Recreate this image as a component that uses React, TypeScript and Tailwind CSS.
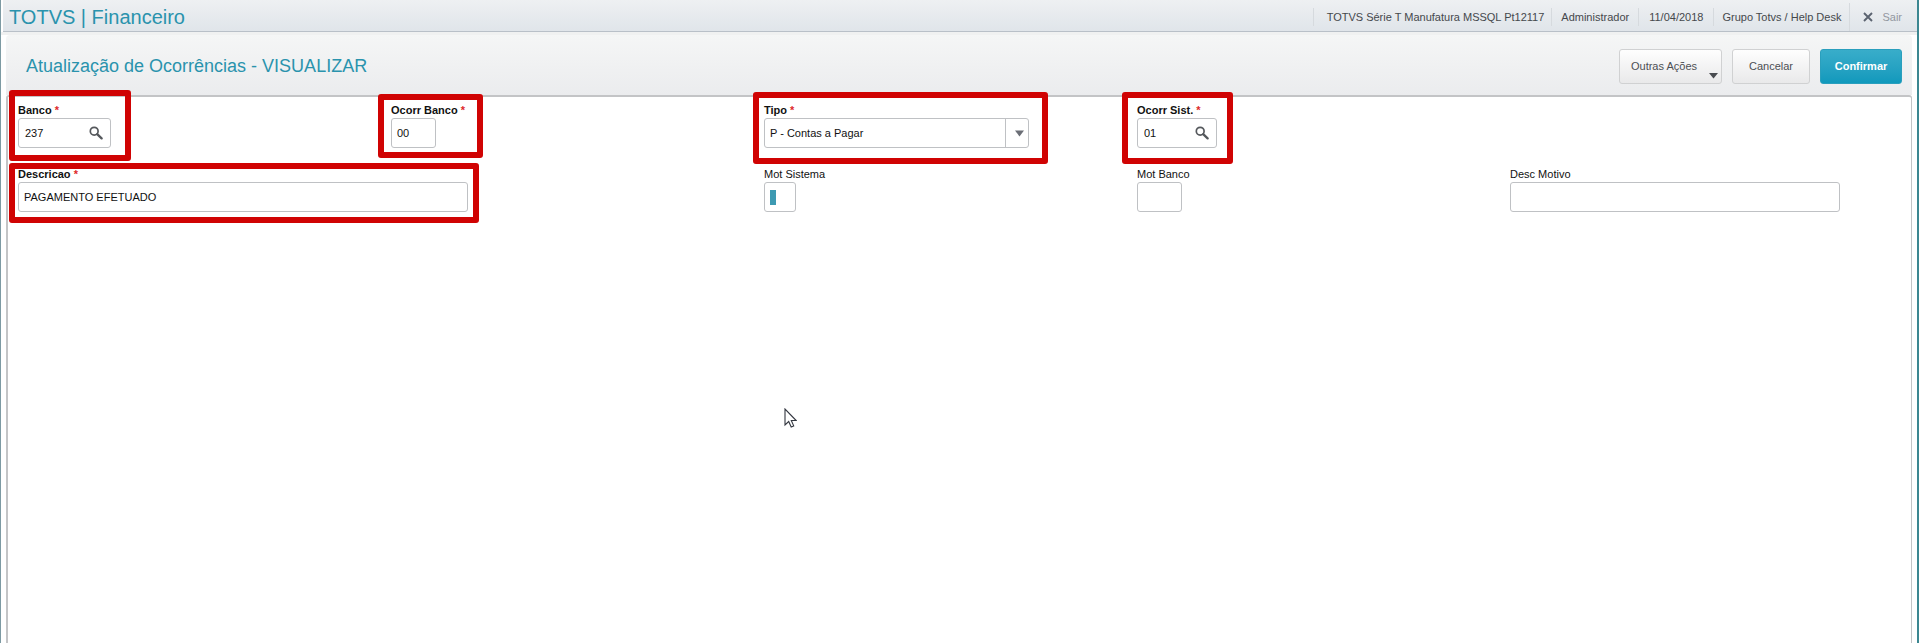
import type { ReactNode } from 'react';

type FieldProps = {
  id: string;
  label: string;
  required?: boolean;
  className?: string;
  mark?: string;
  children: ReactNode;
};

const inputBase =
  'h-[30px] rounded-[3px] border border-[#bfc1c4] bg-white text-[11px] text-[#111] outline-none';

function Field({ id, label, required, className = '', mark, children }: FieldProps) {
  return (
    <div className={`relative flex flex-col items-start ${className}`}>
      <label
        htmlFor={id}
        className={`h-[15px] whitespace-nowrap text-[11px] leading-[15px] text-[#111] ${required ? 'font-bold' : ''}`}
      >
        {label}
        {required && <span className="text-[#dd2a2a]"> *</span>}
      </label>
      {children}
      {mark && (
        <span
          aria-hidden="true"
          className={`pointer-events-none absolute rounded-[3px] border-[6px] border-[#d00303] ${mark}`}
        />
      )}
    </div>
  );
}

function SearchIcon() {
  return (
    <svg width="14" height="14" viewBox="0 0 14 14" fill="none" stroke="#55585c" aria-hidden="true">
      <circle cx="5.2" cy="5.2" r="3.9" strokeWidth="1.7" />
      <path d="M8.2 8.2 12.6 12.4" strokeWidth="2.3" strokeLinecap="round" />
    </svg>
  );
}

function SearchInput({ id, value, className }: { id: string; value: string; className: string }) {
  return (
    <div className={`flex items-center pr-[7px] pl-[6px] ${inputBase} ${className}`}>
      <input id={id} readOnly value={value} className="min-w-0 flex-1 outline-none" />
      <button type="button" aria-label="Pesquisar">
        <SearchIcon />
      </button>
    </div>
  );
}

export default function App() {
  return (
    <div className="relative flex min-h-screen flex-col border-r-2 border-l border-r-[#3c8791] border-l-[#7d9aa3] bg-white font-['Liberation_Sans',Arial,sans-serif]">
      <header className="ml-[2px] flex h-8 items-center justify-between border-b border-[#b9c0c8] bg-linear-to-b from-[#eef0f2] to-[#e0e5ea]">
        <div className="pt-[3px] pl-[6px] text-[20px] leading-6 text-[#2a93ad]">TOTVS | Financeiro</div>
        <div className="flex items-center pt-[3px] text-[11px] whitespace-nowrap text-[#45484c]">
          <span className="flex h-[18px] items-center border-l border-[#d6dade] pr-[7px] pl-[13px]">
            TOTVS Série T Manufatura MSSQL Pt12117
          </span>
          <span className="flex h-[18px] items-center border-l border-[#d6dade] px-[9px]">Administrador</span>
          <span className="flex h-[18px] items-center border-l border-[#d6dade] px-[10px]">11/04/2018</span>
          <span className="flex h-[18px] items-center border-l border-[#d6dade] px-2">
            Grupo Totvs / Help Desk
          </span>
          <button
            type="button"
            className="flex h-[28px] items-center gap-[9px] border-l border-[#d6dade] pr-[15px] pl-[13px] text-[#9297a0]"
          >
            <svg width="10" height="10" viewBox="0 0 10 10" stroke="#5b6370" strokeWidth="1.9" aria-hidden="true">
              <path d="M1 1 9 9M9 1 1 9" />
            </svg>
            Sair
          </button>
        </div>
      </header>

      <div className="h-[3px] bg-[#f0f1f1]" />

      <main className="mr-[5px] ml-[5px] flex flex-1 flex-col">
        <div className="flex h-[60px] items-center justify-between rounded-t-sm bg-linear-to-b from-[#f5f6f6] to-[#ebecee] pr-[10px] pl-5">
          <h1 className="pt-[2px] text-[18px] text-[#2a93ad]">Atualização de Ocorrências - VISUALIZAR</h1>
          <div className="flex gap-[10px] pt-[3px] text-[11px]">
            <button
              type="button"
              className="relative h-[35px] w-[103px] rounded-[3px] border border-[#d0d1d2] bg-linear-to-b from-[#fefefe] to-[#e9e9ea] pr-[13px] text-[#4c4f54]"
            >
              Outras Ações
              <svg className="absolute right-[3px] bottom-[4px]" width="9" height="6" viewBox="0 0 9 6" aria-hidden="true">
                <path d="M0 0h9L4.500 5.500z" fill="#484b50" />
              </svg>
            </button>
            <button
              type="button"
              className="h-[35px] w-[78px] rounded-[3px] border border-[#d0d1d2] bg-linear-to-b from-[#fefefe] to-[#e9e9ea] text-[#4c4f54]"
            >
              Cancelar
            </button>
            <button
              type="button"
              className="h-[35px] w-[82px] rounded-[3px] border border-[#2a9fbd] bg-linear-to-b from-[#38adca] to-[#1099bc] font-bold text-white"
            >
              Confirmar
            </button>
          </div>
        </div>

        <form className="grid flex-1 grid-cols-5 content-start gap-y-[19px] rounded-t-[3px] border-t-2 border-r border-l-2 border-[#c3c4c6] pt-[6px] pr-[28px] pl-[10px]">
          <Field id="banco" label="Banco" required mark="-left-[9px] -top-[13px] h-[71px] w-[122px]">
            <SearchInput id="banco" value="237" className="w-[93px]" />
          </Field>
          <Field id="ocorr-banco" label="Ocorr Banco" required mark="-left-[13px] -top-[9px] h-[64px] w-[105px]">
            <input id="ocorr-banco" readOnly value="00" className={`w-[45px] px-[5px] ${inputBase}`} />
          </Field>
          <Field id="tipo" label="Tipo" required mark="-left-[11px] -top-[11px] h-[72px] w-[295px]">
            <div className="relative">
              <select id="tipo" className={`w-[265px] appearance-none px-[5px] ${inputBase}`}>
                <option>P - Contas a Pagar</option>
              </select>
              <span className="pointer-events-none absolute top-px right-px bottom-px flex w-[23px] items-center justify-center border-l border-[#bfc1c4]">
                <svg width="9" height="7" viewBox="0 0 9 7" className="ml-1" aria-hidden="true">
                  <path d="M0 0.500h9L4.500 6.500z" fill="#6b6e76" />
                </svg>
              </span>
            </div>
          </Field>
          <Field id="ocorr-sist" label="Ocorr Sist." required mark="-left-[15px] -top-[11px] h-[72px] w-[111px]">
            <SearchInput id="ocorr-sist" value="01" className="w-[80px]" />
          </Field>

          <Field
            id="descricao"
            label="Descricao"
            required
            className="col-span-2 col-start-1"
            mark="-left-[9px] -top-[4px] h-[60px] w-[470px]"
          >
            <input
              id="descricao"
              readOnly
              value="PAGAMENTO EFETUADO"
              className={`w-[450px] px-[5px] ${inputBase}`}
            />
          </Field>
          <Field id="mot-sistema" label="Mot Sistema">
            <div className={`flex w-[32px] items-center pl-[5px] ${inputBase}`}>
              <span className="h-[15px] w-[6px] shrink-0 bg-[#3d9ab2]" />
              <input id="mot-sistema" readOnly className="w-full min-w-0 outline-none" />
            </div>
          </Field>
          <Field id="mot-banco" label="Mot Banco">
            <input id="mot-banco" readOnly className={`w-[45px] px-[5px] ${inputBase}`} />
          </Field>
          <Field id="desc-motivo" label="Desc Motivo">
            <input id="desc-motivo" readOnly className={`w-[330px] px-[5px] ${inputBase}`} />
          </Field>
        </form>
      </main>

      <svg
        className="pointer-events-none absolute top-[408px] left-[783px]"
        width="13"
        height="20"
        viewBox="0 0 13 20"
        aria-hidden="true"
      >
        <path
          d="M1 1v16l3.700-3.500 2.500 5.500 2.500-1.100-2.400-5.400h4.900z"
          fill="#fff"
          stroke="#333740"
          strokeWidth="1.100"
        />
      </svg>
    </div>
  );
}
